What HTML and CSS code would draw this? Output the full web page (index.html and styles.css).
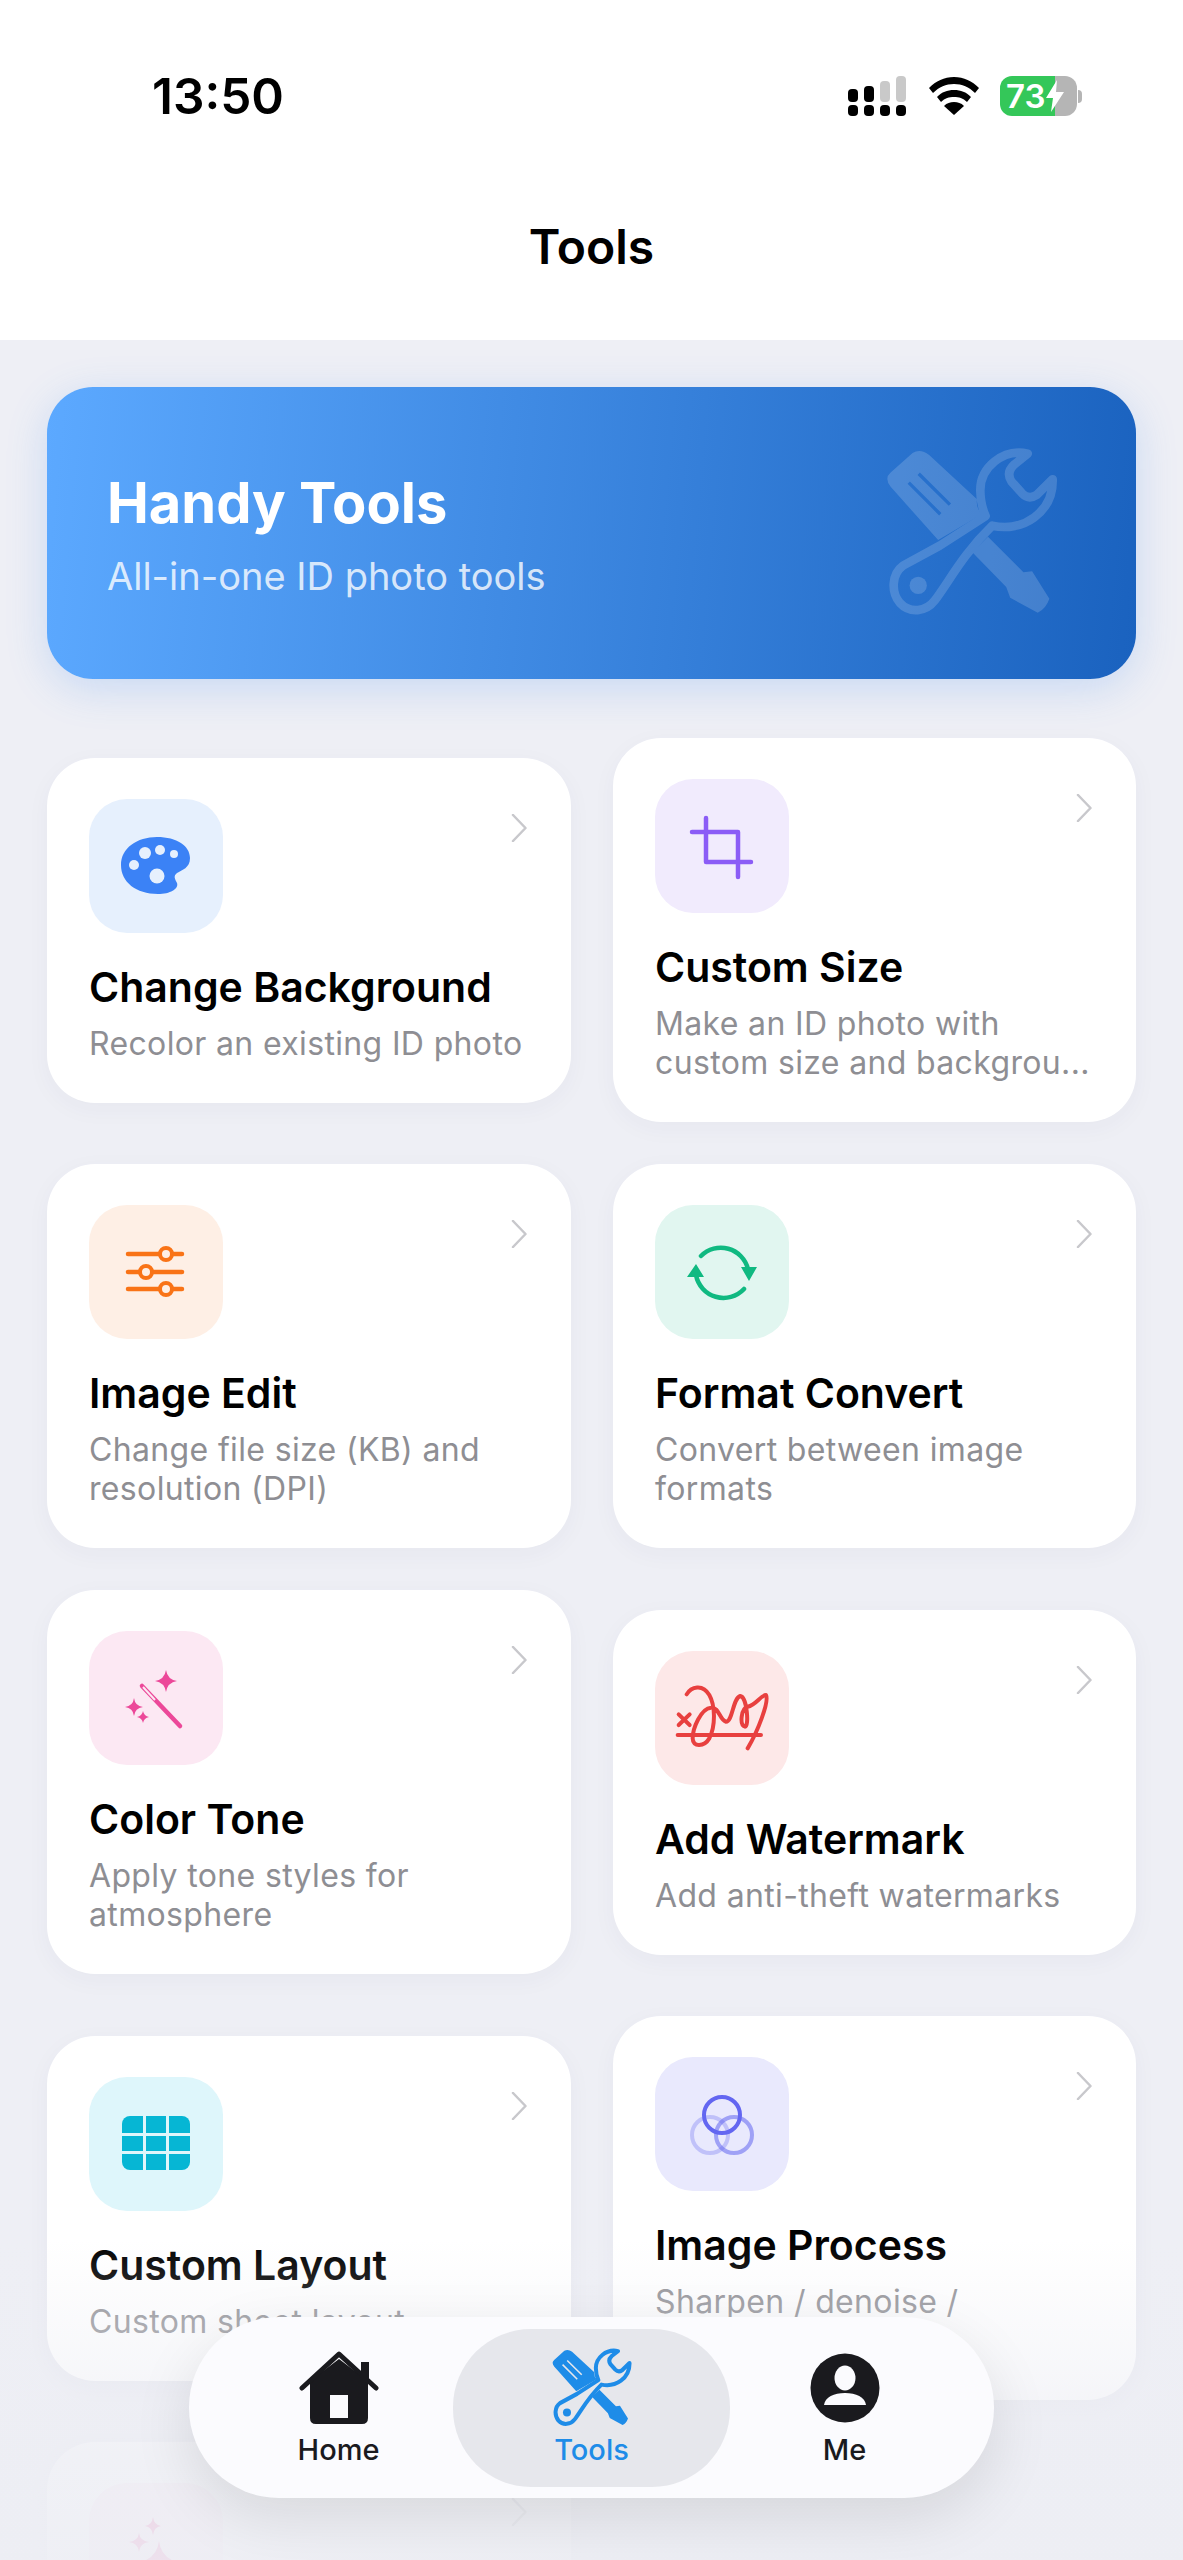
FILE: index.html
```html
<!DOCTYPE html>
<html>

<head>
	<title>Tools</title>
	<meta charset="UTF-8">
	<link rel="stylesheet" href="styles.css">
</head>

<body>
	<svg class="defs" width="0" height="0">
		<symbol id="tools-icon" viewBox="108 92 518 510">
			<path fill-rule="evenodd" d="M188 106Q212 92 238 112L382 245Q378 275 398 290L265 368L122 208Q102 182 122 165ZM210 165L304 258L297 265L203 172ZM180 192L275 287L268 294L173 199Z" />
			<path d="M415 358L522 465L548 462L600 545Q590 575 565 587L482 542L470 510L368 405Z" />
			<path fill="none" stroke="currentColor" stroke-width="26" stroke-linejoin="round" d="M535 108C460 92 392 150 392 218Q392 260 408 296L270 385L160 445C125 470 122 525 150 558C180 590 228 585 255 550C300 490 340 410 428 325C520 345 612 285 610 185L562 232Q538 248 518 228L486 192Q468 165 495 140Z" />
			<circle cx="205" cy="505" r="26" />
		</symbol>
	</svg>

	<div class="screen">
		<header class="top">
			<div class="status">
				<span class="time">13:50</span>
				<div class="status-icons">
					<svg class="signal" width="60" height="42" viewBox="0 0 60 42">
						<rect x="0" y="30" width="10" height="11" rx="4" />
						<rect x="16" y="30" width="10" height="11" rx="4" />
						<rect x="32" y="30" width="10" height="11" rx="4" />
						<rect x="48" y="30" width="10" height="11" rx="4" />
						<rect x="0" y="14" width="10" height="13" rx="4" />
						<rect x="16" y="11" width="10" height="16" rx="4" />
						<rect class="off" x="32" y="6" width="10" height="21" rx="4" />
						<rect class="off" x="48" y="1" width="10" height="26" rx="4" />
					</svg>
					<svg class="wifi" width="50" height="38" viewBox="0 0 50 38">
						<path d="M25 0C15 0 7 4 0 11L4 16C10 10 17 7 25 7C33 7 40 10 46 16L50 11C43 4 35 0 25 0Z" />
						<path d="M25 13C18 13 13 15 8 20L12 25C16 21 20 20 25 20C30 20 34 21 38 25L42 20C37 15 32 13 25 13Z" />
						<path d="M25 25C21 25 18 26 15 29L25 38L35 29C32 26 29 25 25 25Z" />
					</svg>
					<div class="battery">
						<div class="battery-body">
							<span class="battery-num">73</span>
							<svg class="bolt" width="18" height="32" viewBox="0 0 18 32">
								<path d="M11 0L0 18H7L5 32L18 12H10Z" />
							</svg>
						</div>
						<span class="battery-nub"></span>
					</div>
				</div>
			</div>
			<h1 class="page-title">Tools</h1>
		</header>

		<main class="content">
			<section class="banner">
				<div>
					<h2 class="banner-title">Handy Tools</h2>
					<p class="banner-sub">All-in-one ID photo tools</p>
				</div>
				<svg class="banner-icon">
					<use href="#tools-icon" />
				</svg>
			</section>

			<div class="grid">
				<!-- row 1 -->
				<a class="card">
					<div class="card-head">
						<div class="tile tile-blue">
							<svg width="134" height="134" viewBox="0 0 134 134">
								<path fill="#3b82f6" d="M68 38C88 38 101 47 101 59C101 69 93 71 88 74C84 77 86 80 88 84C90 90 81 95 69 95C47 95 32 83 32 66C32 49 48 38 68 38Z" />
								<g fill="#e6f0fd">
									<circle cx="45" cy="66" r="5" />
									<circle cx="56" cy="54" r="6" />
									<circle cx="71" cy="51" r="5" />
									<circle cx="85" cy="55" r="4" />
									<circle cx="68" cy="77" r="7.5" />
								</g>
							</svg>
						</div>
						<svg class="chev" width="16" height="28" viewBox="0 0 16 28"><path d="M2 1L14.5 14L2 27" /></svg>
					</div>
					<h3 class="card-title">Change Background</h3>
					<p class="card-desc">Recolor an existing ID photo</p>
				</a>
				<a class="card">
					<div class="card-head">
						<div class="tile tile-purple">
							<svg width="134" height="134" viewBox="0 0 134 134">
								<path class="line" stroke="#8b5cf6" d="M51 39V83H96M37 53H83V98" />
							</svg>
						</div>
						<svg class="chev" width="16" height="28" viewBox="0 0 16 28"><path d="M2 1L14.5 14L2 27" /></svg>
					</div>
					<h3 class="card-title">Custom Size</h3>
					<p class="card-desc">Make an ID photo with custom size and backgrou...</p>
				</a>

				<!-- row 2 -->
				<a class="card">
					<div class="card-head">
						<div class="tile tile-orange">
							<svg width="134" height="134" viewBox="0 0 134 134">
								<path class="line" stroke="#f97316" d="M39 49H93M39 67H93M39 84H93" />
								<g fill="#feefe5" stroke="#f97316" stroke-width="4">
									<circle cx="77" cy="49" r="6" />
									<circle cx="57" cy="67" r="6" />
									<circle cx="77" cy="84" r="6" />
								</g>
							</svg>
						</div>
						<svg class="chev" width="16" height="28" viewBox="0 0 16 28"><path d="M2 1L14.5 14L2 27" /></svg>
					</div>
					<h3 class="card-title">Image Edit</h3>
					<p class="card-desc">Change file size (KB) and resolution (DPI)</p>
				</a>
				<a class="card">
					<div class="card-head">
						<div class="tile tile-green">
							<svg width="134" height="134" viewBox="0 0 134 134">
								<path class="line" stroke="#10b981" d="M46 51A28 28 0 0 1 93 64M89 84A28 28 0 0 1 41 70" />
								<path fill="#10b981" d="M86 62H102L94 76ZM32 72H49L41 59Z" />
							</svg>
						</div>
						<svg class="chev" width="16" height="28" viewBox="0 0 16 28"><path d="M2 1L14.5 14L2 27" /></svg>
					</div>
					<h3 class="card-title">Format Convert</h3>
					<p class="card-desc">Convert between image formats</p>
				</a>

				<!-- row 3 -->
				<a class="card">
					<div class="card-head">
						<div class="tile tile-pink">
							<svg width="134" height="134" viewBox="0 0 134 134">
								<path fill="#ec4899" d="M77 39Q78.5 48.5 88 50Q78.5 51.5 77 61Q75.5 51.5 66 50Q75.5 48.5 77 39ZM45 67Q46 75 54 76Q46 77 45 85Q44 77 36 76Q44 75 45 67ZM54 80Q55 85 60 86Q55 87 54 92Q53 87 48 86Q53 85 54 80Z" />
								<path class="line" stroke="#ec4899" stroke-width="5.5" d="M53 55L91 95" />
								<path d="M54 56L66 69" stroke="#fce8f3" stroke-width="2" />
							</svg>
						</div>
						<svg class="chev" width="16" height="28" viewBox="0 0 16 28"><path d="M2 1L14.5 14L2 27" /></svg>
					</div>
					<h3 class="card-title">Color Tone</h3>
					<p class="card-desc">Apply tone styles for atmosphere</p>
				</a>
				<a class="card">
					<div class="card-head">
						<div class="tile tile-red">
							<svg width="134" height="134" viewBox="0 0 134 134">
								<g transform="translate(-14 -9.3) scale(.3333)" fill="none" stroke="#e8403f" stroke-width="12" stroke-linecap="round" stroke-linejoin="round">
									<path d="M137 158C150 135 185 125 205 160C222 190 225 250 205 290C190 315 155 318 155 290C155 260 180 200 210 198C235 195 235 235 255 240C275 240 275 170 298 163C318 165 325 255 312 255C295 250 300 200 320 195C345 190 360 160 375 160C385 180 350 270 320 320" />
									<path d="M110 280H360M113 218L146 250M146 218L113 250" />
								</g>
							</svg>
						</div>
						<svg class="chev" width="16" height="28" viewBox="0 0 16 28"><path d="M2 1L14.5 14L2 27" /></svg>
					</div>
					<h3 class="card-title">Add Watermark</h3>
					<p class="card-desc">Add anti-theft watermarks</p>
				</a>

				<!-- row 4 -->
				<a class="card">
					<div class="card-head">
						<div class="tile tile-cyan">
							<svg width="134" height="134" viewBox="0 0 134 134">
								<rect x="33" y="39" width="68" height="54" rx="8" fill="#06b6d4" />
								<path stroke="#def6fb" stroke-width="3" d="M55.5 39V93M78.5 39V93M33 57.5H101M33 75.5H101" />
							</svg>
						</div>
						<svg class="chev" width="16" height="28" viewBox="0 0 16 28"><path d="M2 1L14.5 14L2 27" /></svg>
					</div>
					<h3 class="card-title">Custom Layout</h3>
					<p class="card-desc">Custom sheet layout</p>
				</a>
				<a class="card">
					<div class="card-head">
						<div class="tile tile-indigo">
							<svg width="134" height="134" viewBox="0 0 134 134">
								<g fill="none" stroke="#6366f1" stroke-width="4">
									<circle cx="55" cy="78" r="18" opacity=".3" />
									<circle cx="79" cy="78" r="18" opacity=".55" />
									<circle cx="67" cy="58" r="18" />
								</g>
							</svg>
						</div>
						<svg class="chev" width="16" height="28" viewBox="0 0 16 28"><path d="M2 1L14.5 14L2 27" /></svg>
					</div>
					<h3 class="card-title">Image Process</h3>
					<p class="card-desc">Sharpen / denoise / restoration</p>
				</a>

				<!-- row 5, runs off the bottom of the screen -->
				<a class="card">
					<div class="card-head">
						<div class="tile tile-pink">
							<svg width="134" height="134" viewBox="0 0 134 134">
								<path fill="#ec4899" d="M64 34Q65 42 72 43Q65 44 64 52Q63 44 56 43Q63 42 64 34ZM50 50Q51 58 60 59Q51 60 50 69Q49 60 40 59Q49 58 50 50ZM70 58Q72 76 92 80Q72 84 70 102Q68 84 48 80Q68 76 70 58Z" />
							</svg>
						</div>
						<svg class="chev" width="16" height="28" viewBox="0 0 16 28"><path d="M2 1L14.5 14L2 27" /></svg>
					</div>
				</a>
			</div>
		</main>

		<div class="fade"></div>

		<nav class="tabbar">
			<a class="tab">
				<svg class="tab-icon" viewBox="0 -3 80 80">
					<path fill="#1a1a1e" fill-rule="evenodd" d="M11 30L40 8L69 30V67Q69 73 63 73H17Q11 73 11 67ZM31 44V67H49V44Z" />
					<path fill="none" stroke="#1a1a1e" stroke-width="5" stroke-linecap="round" stroke-linejoin="round" d="M3 37L40 3L77 37" />
					<rect x="62" y="11" width="8" height="20" fill="#1a1a1e" />
				</svg>
				<span class="tab-label">Home</span>
			</a>
			<a class="tab tab-active">
				<svg class="tab-icon tools-small">
					<use href="#tools-icon" />
				</svg>
				<span class="tab-label">Tools</span>
			</a>
			<a class="tab">
				<svg class="tab-icon" viewBox="-5 -5 80 80">
					<circle cx="35" cy="35" r="34.5" fill="#1a1a1e" />
					<ellipse cx="35" cy="25" rx="10.5" ry="12.5" fill="#fbfbfe" />
					<path fill="#fbfbfe" d="M14 52C15 44 24 40 35 40C46 40 55 44 56 52Z" />
				</svg>
				<span class="tab-label">Me</span>
			</a>
		</nav>
	</div>
</body>

</html>
```

FILE: styles.css
```css
* {
	box-sizing: border-box;
}

html,
body {
	margin: 0;
	padding: 0;
}

body {
	font-family: Inter, "Noto Sans", sans-serif;
	background: #eeeff5;
}

.defs {
	position: absolute;
}

.screen {
	position: relative;
	width: 1183px;
	height: 2560px;
	overflow: hidden;
	background: #eeeff5;
}

/* header */
.top {
	background: #fff;
	height: 340px;
	padding-top: 75px;
}

.status {
	display: flex;
	justify-content: space-between;
	align-items: center;
	height: 42px;
	padding: 0 101px 0 152px;
}

.time {
	font-size: 49.5px;
	font-weight: 600;
	color: #000;
}

.status-icons {
	display: flex;
	align-items: center;
	gap: 21px;
}

.signal rect {
	fill: #000;
}

.signal .off {
	fill: #c9c9c9;
}

.battery {
	display: flex;
	align-items: center;
	gap: 1px;
}

.battery-body {
	display: flex;
	align-items: center;
	width: 77px;
	height: 40px;
	border-radius: 12px;
	padding-left: 6px;
	background: linear-gradient(90deg, #34c759 0, #34c759 55px, #b5b5b5 55px);
}

.battery-num {
	font-size: 33px;
	font-weight: 600;
	color: #fff;
}

.bolt {
	fill: #fff;
	margin-left: 1px;
}

.battery-nub {
	width: 4px;
	height: 13px;
	border-radius: 0 4px 4px 0;
	background: #b5b5b5;
}

.page-title {
	margin: 102px 0 0;
	text-align: center;
	font-size: 48px;
	line-height: 56px;
	font-weight: 600;
	color: #000;
}

/* content */
.content {
	padding: 47px 47px 0;
}

.banner {
	display: flex;
	justify-content: space-between;
	align-items: center;
	height: 292px;
	padding: 0 78px 0 60px;
	border-radius: 46px;
	background: linear-gradient(95deg, #5ca9ff, #1a62bf);
	box-shadow: 0 10px 40px rgba(70, 140, 240, .22);
}

.banner-title {
	margin: 0;
	font-size: 56px;
	line-height: 68px;
	font-weight: 700;
	color: #fff;
}

.banner-sub {
	margin: 17px 0 0;
	font-size: 38px;
	line-height: 44px;
	color: rgba(255, 255, 255, .8);
}

.banner-icon {
	width: 172px;
	height: 170px;
	color: #fff;
	fill: #fff;
	opacity: .16;
}

.grid {
	display: grid;
	grid-template-columns: 524px 523px;
	gap: 42px;
	align-items: center;
	margin-top: 59px;
}

.card {
	display: block;
	padding: 41px 42px 40px;
	border-radius: 48px;
	background: #fff;
	box-shadow: 0 6px 24px rgba(60, 60, 90, .04);
}

.card-head {
	display: flex;
	justify-content: space-between;
	align-items: flex-start;
}

.tile {
	width: 134px;
	height: 134px;
	border-radius: 38px;
}

.tile svg {
	display: block;
}

.tile-blue {
	background: #e6f0fd;
}

.tile-purple {
	background: #f1ebfd;
}

.tile-orange {
	background: #feefe5;
}

.tile-green {
	background: #e1f6f0;
}

.tile-pink {
	background: #fce8f3;
}

.tile-red {
	background: #fde8e8;
}

.tile-cyan {
	background: #def6fb;
}

.tile-indigo {
	background: #e9e9fd;
}

.line {
	fill: none;
	stroke-width: 4.5;
	stroke-linecap: round;
	stroke-linejoin: round;
}

.chev {
	margin: 15px 2px 0 0;
	fill: none;
	stroke: #c8c8cc;
	stroke-width: 2.5;
	stroke-linecap: round;
	stroke-linejoin: round;
}

.card-title {
	margin: 30px 0 0;
	font-size: 41px;
	line-height: 48px;
	font-weight: 600;
	color: #000;
}

.card-desc {
	margin: 13px 0 0;
	font-size: 32px;
	line-height: 39px;
	letter-spacing: .35px;
	color: #8e8e93;
}

/* bottom fade and tab bar */
.fade {
	position: absolute;
	left: 0;
	right: 0;
	bottom: 0;
	height: 320px;
	background: linear-gradient(180deg, rgba(237, 238, 244, 0), rgba(237, 238, 244, .5) 44%, rgba(237, 238, 244, .82) 66%, rgba(237, 238, 244, .92));
}

.tabbar {
	position: absolute;
	left: 189px;
	top: 2317px;
	display: flex;
	justify-content: center;
	align-items: center;
	width: 805px;
	height: 181px;
	border-radius: 90px;
	background: #fbfbfe;
	box-shadow: 0 20px 60px rgba(0, 0, 0, .1);
}

.tab {
	display: flex;
	flex-direction: column;
	align-items: center;
	width: 253px;
	height: 158px;
	padding-top: 19px;
}

.tab-active {
	width: 277px;
	margin: 0 -12px;
	border-radius: 78px;
	background: #e6e7ec;
}

.tab-icon {
	display: block;
	width: 80px;
	height: 80px;
}

.tools-small {
	color: #1e8ce8;
	fill: #1e8ce8;
}

.tab-label {
	margin-top: 5px;
	font-size: 29px;
	line-height: 34px;
	font-weight: 500;
	color: #1a1a1e;
}

.tab-active .tab-label {
	color: #1e8ce8;
}
```
